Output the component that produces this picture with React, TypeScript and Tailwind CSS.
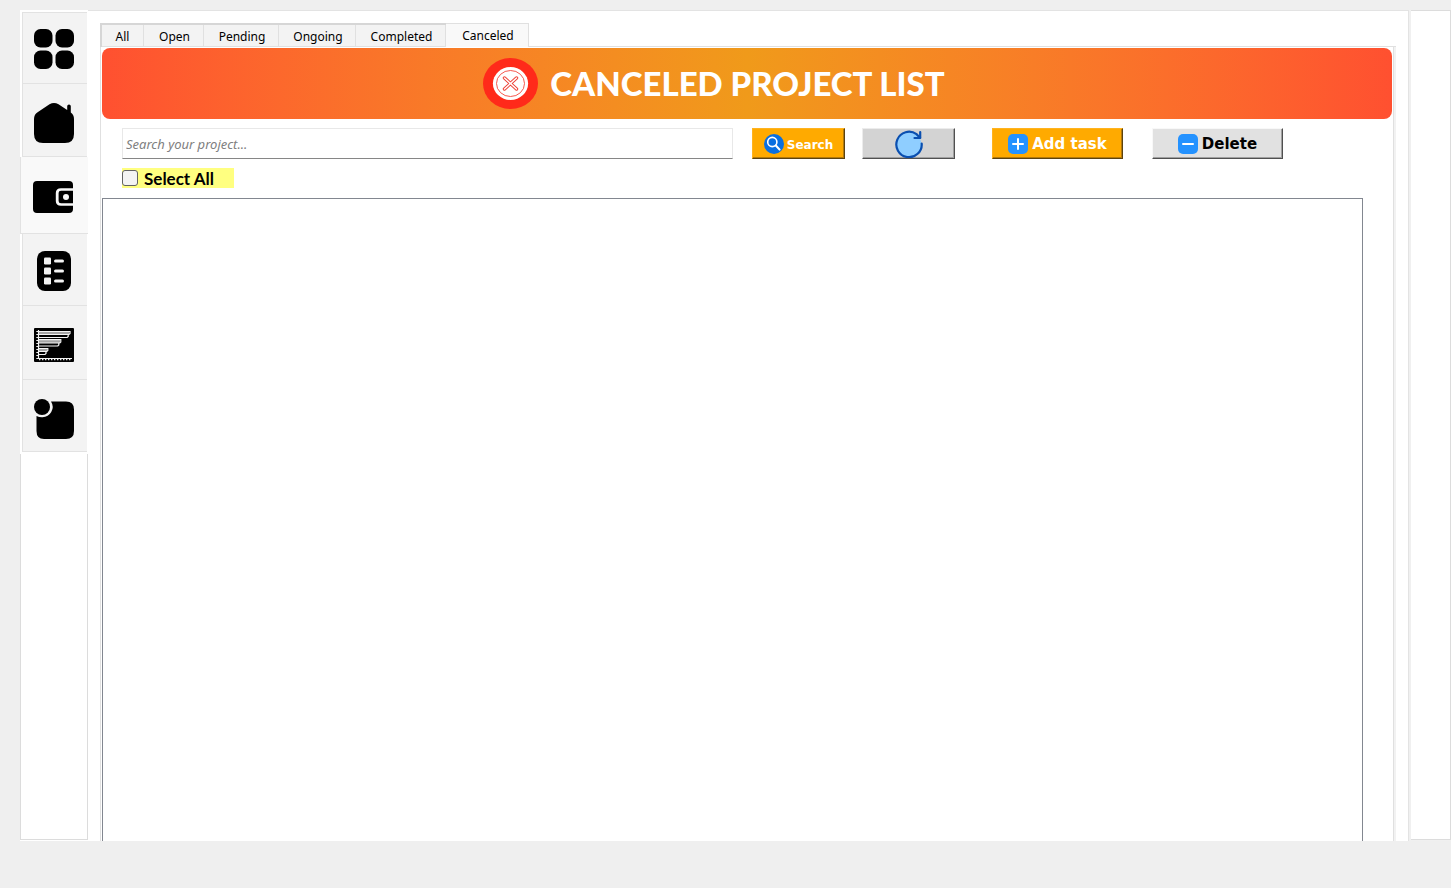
import { useState } from 'react';
import type { ReactNode } from 'react';

const DashboardIcon = () => (
  <svg width="40" height="40" viewBox="0 0 40 40" aria-hidden="true">
    <rect x="0" y="0" width="18.5" height="18.5" rx="6.5" />
    <rect x="21.5" y="0" width="18.5" height="18.5" rx="6.5" />
    <rect x="0" y="21.5" width="18.5" height="18.5" rx="6.5" />
    <rect x="21.5" y="21.5" width="18.5" height="18.5" rx="6.5" />
  </svg>
);

const HomeIcon = () => (
  <svg width="40" height="40" viewBox="0 0 40 40" aria-hidden="true">
    <path d="M15.5 1.2Q20 -1.2 24.5 1.2L33.2 7V3.2Q33.2 1.6 35 1.6T36.8 3.2V9.5Q40 11.8 40 16V31Q40 40 31 40H9Q0 40 0 31V16Q0 11.5 3.6 9.2Z" />
  </svg>
);

const WalletIcon = () => (
  <svg width="40" height="32" viewBox="0 0 40 32" aria-hidden="true">
    <path d="M4 0H36Q40 0 40 4V7.2H28Q22.8 7.2 22.8 12V20Q22.8 24.8 28 24.8H40V28Q40 32 36 32H4Q0 32 0 28V4Q0 0 4 0Z" />
    <path d="M28 9.8H40V22.2H28Q25.6 22.2 25.6 20V12Q25.6 9.8 28 9.8Z" />
    <circle cx="33" cy="16" r="3" fill="#f9f9f9" />
  </svg>
);

const ListIcon = () => (
  <svg width="34" height="40" viewBox="0 0 34 40" aria-hidden="true">
    <rect width="34" height="40" rx="8" />
    <g fill="#f3f3f3">
      <rect x="7" y="6.5" width="7" height="7" rx="1.3" />
      <rect x="7" y="16.5" width="7" height="7" rx="1.3" />
      <rect x="7" y="26.5" width="7" height="7" rx="1.3" />
      <rect x="17" y="8.5" width="10" height="3" rx="1.5" />
      <rect x="17" y="18.5" width="10" height="3" rx="1.5" />
      <rect x="17" y="28.5" width="10" height="3" rx="1.5" />
    </g>
  </svg>
);

const GanttIcon = () => (
  <svg width="40" height="34" viewBox="0 0 40 34" aria-hidden="true">
    <rect width="40" height="34" rx="1" />
    <g fill="#a4a4a4">
      <rect x="5" y="4" width="30" height="2" />
      <rect x="5" y="12" width="21" height="3" />
      <rect x="5" y="21" width="8" height="2" />
    </g>
    <g fill="none" stroke="#f3f3f3" strokeWidth="1.2">
      <path d="M4.5 2V30.5H38" />
      <path d="M4.5 3.5H36V5.5L35 6.5H4.5M34.2 6.5V8.5L33.2 9.5H4.5" />
      <path d="M4.5 11.6H26.8V14L25.8 15H4.5M24.8 15V17L23.8 18H4.5" />
      <path d="M4.5 20.5H13.8V22.5L12.8 23.5H4.5M12 23.5V25.5L11 26.5H4.5" />
      <path d="M5 31.6H37" strokeDasharray="1.4 1.6" />
      <path d="M2.3 3.5H4M2.3 6.5H4M2.3 9.5H4M2.3 12.5H4M2.3 15.5H4M2.3 18.5H4M2.3 21.5H4M2.3 24.5H4M2.3 27.5H4M2.3 30.5H4" />
    </g>
  </svg>
);

const NotifyIcon = () => (
  <svg width="40" height="40" viewBox="0 0 40 40" aria-hidden="true">
    <path d="M17 2.5H32Q40 2.5 40 10.5V32Q40 40 32 40H10Q2.5 40 2.5 32V17Q5 18.2 8 18.2A10.2 10.2 0 0 0 17 2.5Z" />
    <circle cx="8" cy="8" r="8" />
  </svg>
);

const CancelIcon = () => (
  <svg width="55" height="51" viewBox="0 0 55 51" aria-hidden="true">
    <ellipse cx="27.5" cy="25.5" rx="27.5" ry="25.5" fill="#ff2a1a" />
    <ellipse cx="27.5" cy="25.5" rx="17.6" ry="16.4" fill="#fff" />
    <ellipse cx="27.5" cy="25.5" rx="14" ry="13" fill="none" stroke="#f4453a" strokeWidth="0.9" />
    <path d="M21.5 20L33.5 31M33.5 20L21.5 31" stroke="#ee4136" strokeWidth="3.4" strokeLinecap="round" />
    <path d="M21.5 20L33.5 31M33.5 20L21.5 31" stroke="#fff" strokeWidth="1.5" strokeLinecap="round" />
  </svg>
);

const SearchIcon = () => (
  <svg width="20" height="20" viewBox="0 0 20 20" aria-hidden="true">
    <circle cx="10" cy="10" r="10" fill="#0a6fe0" />
    <circle cx="8.3" cy="8" r="4.6" fill="none" stroke="#fff" strokeWidth="1.6" />
    <path d="M11.8 11.5L15.6 15.6" stroke="#fff" strokeWidth="2.1" strokeLinecap="round" />
  </svg>
);

const RefreshIcon = () => (
  <svg width="28" height="28" viewBox="0 0 28 28" aria-hidden="true">
    <circle cx="14" cy="14.5" r="12.3" fill="#8fceff" />
    <path d="M26.7 13.5A12.7 12.7 0 1 1 21.5 4.2L25 7.8" fill="none" stroke="#0a4fb0" strokeWidth="2.2" strokeLinecap="round" />
    <path d="M25.2 2V8H19.5" fill="none" stroke="#0a4fb0" strokeWidth="2.2" strokeLinecap="round" strokeLinejoin="round" />
  </svg>
);

const SignIcon = ({ plus }: { plus?: boolean }) => (
  <svg width="20" height="20" viewBox="0 0 20 20" aria-hidden="true">
    <rect width="20" height="20" rx="5" fill="#2492ff" />
    <path d={plus ? 'M5 10H15M10 5V15' : 'M5 10H15'} stroke="#fff" strokeWidth="2" strokeLinecap="round" />
  </svg>
);

const sections: { name: string; icon: ReactNode; size: string }[] = [
  { name: 'Dashboard', icon: <DashboardIcon />, size: 'h-[72px] border-t pt-0.5' },
  { name: 'Home', icon: <HomeIcon />, size: 'h-[73px] pt-1.5' },
  { name: 'Projects', icon: <WalletIcon />, size: 'h-[77px] pt-1' },
  { name: 'Tasks', icon: <ListIcon />, size: 'h-[72px] pt-0.5' },
  { name: 'Timeline', icon: <GanttIcon />, size: 'h-[74px] pt-1' },
  { name: 'Notifications', icon: <NotifyIcon />, size: 'h-[72px] pt-1.5' },
];

const filters = [
  { name: 'All', width: 'w-[42px]' },
  { name: 'Open', width: 'w-[60px]' },
  { name: 'Pending', width: 'w-[75px]' },
  { name: 'Ongoing', width: 'w-[77px]' },
  { name: 'Completed', width: 'w-[90px]' },
];

function Sidebar() {
  return (
    <aside className="flex w-[68px] shrink-0 flex-col bg-white pb-px">
      <nav className="flex flex-col pt-0.5 pb-0.5">
        {sections.map(({ name, icon, size }) => {
          const current = name === 'Projects';
          return (
            <button
              key={name}
              type="button"
              aria-label={name}
              aria-current={current ? 'page' : undefined}
              className={`flex items-center justify-center border-b border-l border-[#e2e2e2] ${size} ${
                current ? 'bg-[#f9f9f9] pr-1' : 'ml-0.5 mr-px bg-[#f3f3f3] pr-0.5'
              }`}
            >
              {icon}
            </button>
          );
        })}
      </nav>
      <div className="flex-1 border-r border-b border-l border-[#dcdcdc]" />
    </aside>
  );
}

function FilterTabs() {
  return (
    <div role="tablist" className="flex h-6 font-['Noto_Sans',sans-serif] text-xs text-black">
      <div className="flex border-t-2 border-l-2 border-[#d6d6d6]">
        {filters.map(({ name, width }) => (
          <button
            key={name}
            type="button"
            role="tab"
            aria-selected={false}
            className={`border-r border-b border-[#e0e0e0] bg-[#f3f3f3] pt-0.5 pl-0.5 first:pl-0 ${width}`}
          >
            {name}
          </button>
        ))}
      </div>
      <button type="button" role="tab" aria-selected className="w-[83px] border-t border-r border-[#e0e0e0] bg-[#f9f9f9] pl-0.5">
        Canceled
      </button>
      <div className="flex-1 border-b border-[#e0e0e0]" />
    </div>
  );
}

function Toolbar() {
  const bevel = 'flex h-[31px] shrink-0 items-center justify-center border';
  const amber =
    'border-[#ffb31f] border-r-[#5c4310] border-b-[#5c4310] bg-[#ffaa00] text-white shadow-[inset_-1px_-1px_0_#b37a0c]';
  return (
    <form
      className="mt-[9px] mr-[110px] ml-[21px] flex font-['DejaVu_Sans',sans-serif] font-bold"
      onSubmit={(event) => event.preventDefault()}
    >
      <input
        type="text"
        aria-label="Search your project"
        placeholder="Search your project..."
        className="mr-[19px] h-[31px] min-w-0 flex-1 border border-[#e8e8e8] border-b-[#868686] bg-white px-[3px] font-['Noto_Sans',sans-serif] text-[13px] font-normal italic text-black outline-none placeholder:text-[#808080]"
      />
      <button type="submit" className={`${bevel} ${amber} mr-[17px] w-[93px] gap-[3px] text-xs`}>
        <SearchIcon />
        <span className="pt-0.5">Search</span>
      </button>
      <button type="button" aria-label="Refresh" className={`${bevel} mr-[37px] w-[93px] border-[#ececec] border-r-[#505050] border-b-[#505050] bg-[#d3d3d3] shadow-[inset_-1px_-1px_0_#a0a0a0]`}>
        <RefreshIcon />
      </button>
      <button type="button" className={`${bevel} ${amber} mr-[29px] w-[131px] gap-1 text-[15px]`}>
        <SignIcon plus />
        <span className="pt-0.5">Add task</span>
      </button>
      <button type="button" className={`${bevel} w-[131px] gap-1 border-[#f8f8f8] border-r-[#505050] border-b-[#505050] bg-[#e1e1e1] text-[15px] text-black shadow-[inset_-1px_-1px_0_#a0a0a0]`}>
        <SignIcon />
        <span className="pt-0.5">Delete</span>
      </button>
    </form>
  );
}

export default function App() {
  const [allSelected, setAllSelected] = useState(false);
  return (
    <div className="flex h-screen bg-[#efefef] pt-2.5 pb-[47px] pl-5">
      <Sidebar />
      <main className="flex min-w-0 flex-1 flex-col border-t border-r border-[#e3e3e3] bg-white pt-3 pr-3 pl-3">
        <FilterTabs />
        <div className="flex min-h-0 flex-1 bg-[#f2f2f2] pr-0.5">
          <div className="flex min-w-0 flex-1 flex-col border-r border-l border-[#e0e0e0] bg-white pt-px">
            <header className="mr-px ml-px flex h-[71px] shrink-0 items-center justify-center gap-3 rounded-lg bg-linear-to-r from-[#ff5030] via-[#f09a1a] to-[#ff5030] pr-[66px]">
              <CancelIcon />
              <h1 className="whitespace-nowrap font-['Lato',sans-serif] text-[33px] font-black text-white">
                CANCELED PROJECT LIST
              </h1>
            </header>
            <Toolbar />
            <label className="mt-[9px] ml-[21px] flex h-5 w-28 shrink-0 items-center gap-1.5 bg-[#ffff80] font-['Lato',sans-serif] text-[17px] font-bold text-black">
              <input
                type="checkbox"
                checked={allSelected}
                onChange={(event) => setAllSelected(event.target.checked)}
                className="size-4 appearance-none rounded-[3px] border border-[#626262] bg-[#f3f3f3] checked:bg-[#0067c0]"
              />
              <span className="pt-0.5">Select All</span>
            </label>
            <section aria-label="Canceled projects" className="mt-2.5 mr-[30px] ml-px min-h-0 flex-1 border-t border-r border-l border-[#828790]" />
          </div>
        </div>
      </main>
      <aside className="flex w-[42px] shrink-0 bg-[#f0f0f0] pl-0.5">
        <div className="mb-px flex-1 border-t border-r border-b border-[#dcdcdc] bg-white" />
      </aside>
    </div>
  );
}
